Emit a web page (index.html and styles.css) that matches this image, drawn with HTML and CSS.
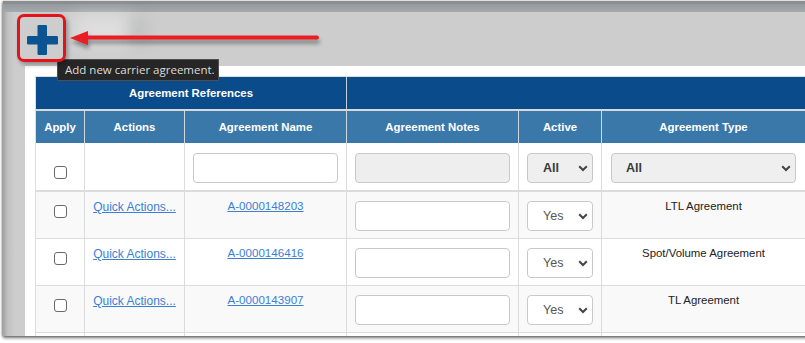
FILE: index.html
```html
<!DOCTYPE html>
<html>
<head>
<meta charset="utf-8">
<title>Carrier Agreements</title>
<link rel="stylesheet" href="styles.css">
</head>
<body>
<div class="window">
  <div class="titlebar"></div>
  <div class="toolbar">
    <button class="add-btn" type="button" aria-label="Add new carrier agreement">
      <svg width="31" height="30" viewBox="0 0 31 30"><rect x="10.5" y="0" width="9.5" height="30" rx="1.2"/><rect x="0" y="11" width="31" height="8.5" rx="1.2"/></svg>
    </button>
  </div>
  <div class="main">
    <div class="side"></div>
    <div class="panel">
      <div class="grid">
        <div class="row grp">
          <div class="c span3 first">Agreement References</div>
          <div class="c span3"></div>
        </div>
        <div class="row head">
          <div class="c">Apply</div>
          <div class="c">Actions</div>
          <div class="c">Agreement Name</div>
          <div class="c">Agreement Notes</div>
          <div class="c">Active</div>
          <div class="c">Agreement Type</div>
        </div>
        <div class="row filter">
          <div class="c chk"><input type="checkbox" class="cb"></div>
          <div class="c"></div>
          <div class="c fld"><input type="text" class="inp"></div>
          <div class="c fld"><input type="text" class="inp dis" disabled></div>
          <div class="c fld"><div class="sel-wrap"><select class="sel grey"><option>All</option></select><svg class="chev" width="10" height="7" viewBox="0 0 10 7"><polyline points="1.2,1.2 5,5 8.8,1.2"/></svg></div></div>
          <div class="c fld type"><div class="sel-wrap"><select class="sel grey"><option>All</option></select><svg class="chev" width="10" height="7" viewBox="0 0 10 7"><polyline points="1.2,1.2 5,5 8.8,1.2"/></svg></div></div>
        </div>
        <div class="row data alt">
          <div class="c chk"><input type="checkbox" class="cb"></div>
          <div class="c txt act"><a href="#" class="lnk qa">Quick Actions...</a></div>
          <div class="c txt"><a href="#" class="lnk">A-0000148203</a></div>
          <div class="c fld"><input type="text" class="inp"></div>
          <div class="c fld"><div class="sel-wrap"><select class="sel yes"><option>Yes</option></select><svg class="chev" width="10" height="7" viewBox="0 0 10 7"><polyline points="1.2,1.2 5,5 8.8,1.2"/></svg></div></div>
          <div class="c txt">LTL Agreement</div>
        </div>
        <div class="row data">
          <div class="c chk"><input type="checkbox" class="cb"></div>
          <div class="c txt act"><a href="#" class="lnk qa">Quick Actions...</a></div>
          <div class="c txt"><a href="#" class="lnk">A-0000146416</a></div>
          <div class="c fld"><input type="text" class="inp"></div>
          <div class="c fld"><div class="sel-wrap"><select class="sel yes"><option>Yes</option></select><svg class="chev" width="10" height="7" viewBox="0 0 10 7"><polyline points="1.2,1.2 5,5 8.8,1.2"/></svg></div></div>
          <div class="c txt">Spot/Volume Agreement</div>
        </div>
        <div class="row data alt">
          <div class="c chk"><input type="checkbox" class="cb"></div>
          <div class="c txt act"><a href="#" class="lnk qa">Quick Actions...</a></div>
          <div class="c txt"><a href="#" class="lnk">A-0000143907</a></div>
          <div class="c fld"><input type="text" class="inp"></div>
          <div class="c fld"><div class="sel-wrap"><select class="sel yes"><option>Yes</option></select><svg class="chev" width="10" height="7" viewBox="0 0 10 7"><polyline points="1.2,1.2 5,5 8.8,1.2"/></svg></div></div>
          <div class="c txt">TL Agreement</div>
        </div>
        <div class="row data">
          <div class="c"></div><div class="c"></div><div class="c"></div><div class="c"></div><div class="c"></div><div class="c"></div>
        </div>
      </div>
    </div>
  </div>
</div>
<div class="haze"></div>
<div class="haze2"></div>
<div class="tooltip">Add new carrier agreement.</div>
<div class="callout-box"></div>
<svg class="arrow" width="262" height="26" viewBox="0 0 262 26"><line x1="18" y1="11.5" x2="251" y2="11.5"/><polygon points="4,12 22,5 22,19"/></svg>
</body>
</html>
```
FILE: styles.css
```css
* { box-sizing: border-box; }
html, body { margin: 0; padding: 0; }
body {
  width: 805px;
  height: 343px;
  overflow: hidden;
  position: relative;
  background: #fff;
  font-family: "Liberation Sans", Arial, sans-serif;
}
.window {
  margin: 1px 0 0 3px;
  width: 840px;
  height: 335px;
  display: flex;
  flex-direction: column;
  overflow: hidden;
  background: linear-gradient(to right, #a3a3a3 0, #c2c2c2 5px, #cdcdcd 12px);
  box-shadow: 0 2px 3px rgba(0,0,0,.55), -1px 0 2px rgba(0,0,0,.3);
}
.titlebar {
  flex: none;
  height: 11px;
  border-top: 3px solid #8b8e91;
  background: linear-gradient(#959a9f, #a4a9ad);
}
.toolbar {
  flex: none;
  height: 54px;
  display: flex;
  align-items: flex-start;
  padding: 13px 0 0 24px;
}
.add-btn {
  border: 0;
  padding: 0;
  margin: 0;
  background: transparent;
  display: block;
  line-height: 0;
}
.add-btn svg { fill: #0b5391; }
.main {
  flex: 1;
  display: flex;
  min-height: 0;
}
.side { width: 22px; flex: none; }
.panel {
  flex: 1;
  background: #fff;
  padding: 10px 0 0 10px;
  overflow: hidden;
}
.grid {
  width: 771px;
  border-left: 1px solid #dcdcdc;
  border-top: 1px solid #dcdcdc;
}
.row {
  display: grid;
  grid-template-columns: 49px 100px 162px 172px 83px 204px;
}
.c { min-width: 0; }
.span3 { grid-column: span 3; }
.grp .c {
  height: 34px;
  background: #0a4c8b;
  border-bottom: 2px solid #d9d9d9;
  color: #fff;
  font-weight: bold;
  font-size: 11.4px;
  display: flex;
  align-items: center;
  justify-content: center;
}
.grp .first { border-right: 1px solid #c8ced6; }
.head .c {
  height: 32px;
  background: #3a78aa;
  border-right: 1px solid #cfd8e1;
  color: #fff;
  font-weight: bold;
  font-size: 11.4px;
  display: flex;
  align-items: center;
  justify-content: center;
}
.filter .c {
  height: 49px;
  background: #fff;
  border-right: 1px solid #dcdcdc;
  border-bottom: 2px solid #dcdcdc;
  padding: 10px 8px 0;
}
.data .c {
  height: 47px;
  background: #fff;
  border-right: 1px solid #dcdcdc;
  border-bottom: 1px solid #dcdcdc;
  padding: 9px 8px 0;
}
.data.alt .c { background: #f9f9f9; }
.filter .chk { padding-top: 23px; text-align: center; }
.data .chk { padding-top: 13px; text-align: center; }
.filter .type, .data .type { padding-left: 9px; padding-right: 9px; }
.data .txt {
  padding-top: 7px;
  text-align: center;
  font-size: 11.4px;
  line-height: 14px;
  color: #222;
}
.data .act { padding: 8px 0 0; }
.cb {
  appearance: none;
  -webkit-appearance: none;
  width: 13px;
  height: 13px;
  margin: 0;
  border: 1px solid #6a6a6a;
  border-radius: 3px;
  background: #fff;
  display: inline-block;
  vertical-align: top;
}
.lnk {
  color: #3b7fd3;
  text-decoration: underline;
  font-size: 11.6px;
}
.lnk.qa { font-size: 12px; }
.inp {
  display: block;
  width: 100%;
  height: 30px;
  margin: 0;
  border: 1px solid #c9c9c9;
  border-radius: 4px;
  background: #fff;
}
.inp.dis { background: #eeeeee; }
.sel-wrap { position: relative; }
.sel {
  appearance: none;
  -webkit-appearance: none;
  display: block;
  width: 100%;
  height: 30px;
  margin: 0;
  padding: 0 0 0 15px;
  border: 1px solid #c9c9c9;
  border-radius: 4px;
  font-family: "Liberation Sans", Arial, sans-serif;
  font-size: 12.5px;
}
.sel.grey { background: #efefef; color: #3a3a3a; font-weight: bold; }
.sel.yes { background: #fff; color: #555; }
.type .sel { padding-left: 14px; }
.chev {
  position: absolute;
  right: 5px;
  top: 12px;
  fill: none;
  stroke: #444;
  stroke-width: 2;
}
.haze {
  position: absolute;
  left: 74px;
  top: 14px;
  width: 58px;
  height: 32px;
  background: rgba(255,255,255,.35);
  filter: blur(8px);
}
.haze2 {
  position: absolute;
  left: 128px;
  top: 16px;
  width: 18px;
  height: 28px;
  background: rgba(130,135,140,.18);
  filter: blur(7px);
}
.tooltip {
  position: absolute;
  left: 57px;
  top: 59px;
  width: 162px;
  height: 22px;
  background: #262626;
  border: 1px solid #4e4e4e;
  color: #dcdcdc;
  font-family: "Open Sans", "Noto Sans", sans-serif;
  font-size: 11.5px;
  line-height: 20px;
  padding-left: 7px;
  white-space: nowrap;
}
.callout-box {
  position: absolute;
  left: 17px;
  top: 14px;
  width: 49px;
  height: 48px;
  border: 3px solid #e3131b;
  border-radius: 7px;
  box-shadow: 2px 3px 4px rgba(0,0,0,.3);
}
.arrow {
  position: absolute;
  left: 66px;
  top: 26px;
  filter: drop-shadow(1px 4px 2px rgba(0,0,0,.4));
}
.arrow line { stroke: #ec1c24; stroke-width: 4; stroke-linecap: round; }
.arrow polygon { fill: #ec1c24; }
```
